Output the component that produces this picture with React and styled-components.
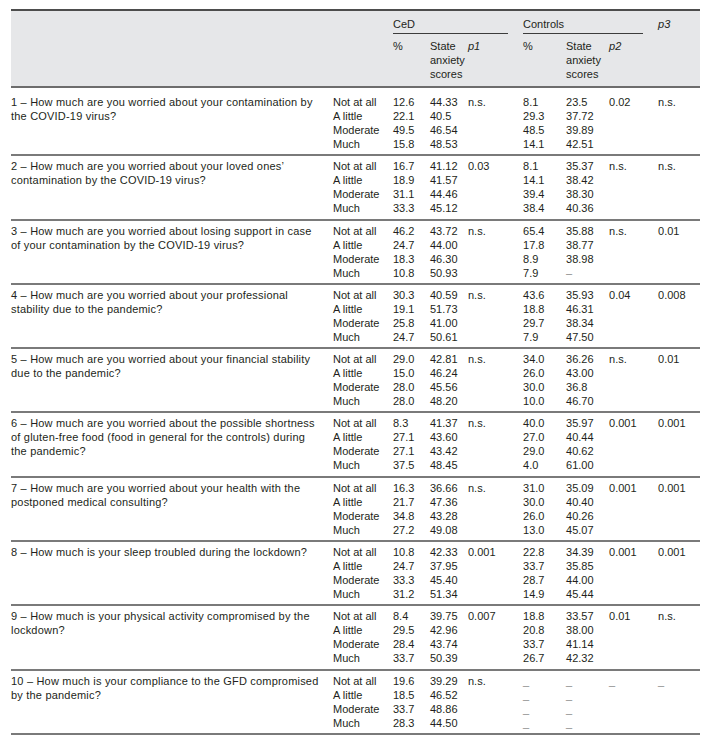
import React from "react";
import styled, { createGlobalStyle } from "styled-components";

const GlobalStyle = createGlobalStyle`
  html, body {
    margin: 0;
    padding: 0;
    background: #ffffff;
  }
  body {
    font-family: "Liberation Sans", Arial, sans-serif;
    font-size: 11px;
    color: #231f20;
  }
`;

const levels = ["Not at all", "A little", "Moderate", "Much"];

const rows = [
  {
    q: "1 – How much are you worried about your contamination by the COVID-19 virus?",
    cedPct: ["12.6", "22.1", "49.5", "15.8"],
    cedScore: ["44.33", "40.5", "46.54", "48.53"],
    p1: "n.s.",
    ctlPct: ["8.1", "29.3", "48.5", "14.1"],
    ctlScore: ["23.5", "37.72", "39.89", "42.51"],
    p2: "0.02",
    p3: "n.s.",
  },
  {
    q: "2 – How much are you worried about your loved ones’ contamination by the COVID-19 virus?",
    cedPct: ["16.7", "18.9", "31.1", "33.3"],
    cedScore: ["41.12", "41.57", "44.46", "45.12"],
    p1: "0.03",
    ctlPct: ["8.1", "14.1", "39.4", "38.4"],
    ctlScore: ["35.37", "38.42", "38.30", "40.36"],
    p2: "n.s.",
    p3: "n.s.",
  },
  {
    q: "3 – How much are you worried about losing support in case of your contamination by the COVID-19 virus?",
    cedPct: ["46.2", "24.7", "18.3", "10.8"],
    cedScore: ["43.72", "44.00", "46.30", "50.93"],
    p1: "n.s.",
    ctlPct: ["65.4", "17.8", "8.9", "7.9"],
    ctlScore: ["35.88", "38.77", "38.98", "–"],
    p2: "n.s.",
    p3: "0.01",
  },
  {
    q: "4 – How much are you worried about your professional stability due to the pandemic?",
    cedPct: ["30.3", "19.1", "25.8", "24.7"],
    cedScore: ["40.59", "51.73", "41.00", "50.61"],
    p1: "n.s.",
    ctlPct: ["43.6", "18.8", "29.7", "7.9"],
    ctlScore: ["35.93", "46.31", "38.34", "47.50"],
    p2: "0.04",
    p3: "0.008",
  },
  {
    q: "5 – How much are you worried about your financial stability due to the pandemic?",
    cedPct: ["29.0", "15.0", "28.0", "28.0"],
    cedScore: ["42.81", "46.24", "45.56", "48.20"],
    p1: "n.s.",
    ctlPct: ["34.0", "26.0", "30.0", "10.0"],
    ctlScore: ["36.26", "43.00", "36.8", "46.70"],
    p2: "n.s.",
    p3: "0.01",
  },
  {
    q: "6 – How much are you worried about the possible shortness of gluten-free food (food in general for the controls) during the pandemic?",
    cedPct: ["8.3", "27.1", "27.1", "37.5"],
    cedScore: ["41.37", "43.60", "43.42", "48.45"],
    p1: "n.s.",
    ctlPct: ["40.0", "27.0", "29.0", "4.0"],
    ctlScore: ["35.97", "40.44", "40.62", "61.00"],
    p2: "0.001",
    p3: "0.001",
  },
  {
    q: "7 – How much are you worried about your health with the postponed medical consulting?",
    cedPct: ["16.3", "21.7", "34.8", "27.2"],
    cedScore: ["36.66", "47.36", "43.28", "49.08"],
    p1: "n.s.",
    ctlPct: ["31.0", "30.0", "26.0", "13.0"],
    ctlScore: ["35.09", "40.40", "40.26", "45.07"],
    p2: "0.001",
    p3: "0.001",
  },
  {
    q: "8 – How much is your sleep troubled during the lockdown?",
    cedPct: ["10.8", "24.7", "33.3", "31.2"],
    cedScore: ["42.33", "37.95", "45.40", "51.34"],
    p1: "0.001",
    ctlPct: ["22.8", "33.7", "28.7", "14.9"],
    ctlScore: ["34.39", "35.85", "44.00", "45.44"],
    p2: "0.001",
    p3: "0.001",
  },
  {
    q: "9 – How much is your physical activity compromised by the lockdown?",
    cedPct: ["8.4", "29.5", "28.4", "33.7"],
    cedScore: ["39.75", "42.96", "43.74", "50.39"],
    p1: "0.007",
    ctlPct: ["18.8", "20.8", "33.7", "26.7"],
    ctlScore: ["33.57", "38.00", "41.14", "42.32"],
    p2: "0.01",
    p3: "n.s.",
  },
  {
    q: "10 – How much is your compliance to the GFD compromised by the pandemic?",
    cedPct: ["19.6", "18.5", "33.7", "28.3"],
    cedScore: ["39.29", "46.52", "48.86", "44.50"],
    p1: "n.s.",
    ctlPct: ["_", "_", "_", "_"],
    ctlScore: ["_", "_", "_", "_"],
    p2: "_",
    p3: "_",
  },
];

const widths = [322, 60, 37, 38, 55, 43, 43, 49, 42];

const Table = styled.table`
  margin: 9px 0 0 11px;
  width: 689px;
  table-layout: fixed;
  border-collapse: separate;
  border-spacing: 0;
  line-height: 14px;
`;

const HeadCell = styled.th`
  background: #e6e7e9;
  font-weight: normal;
  text-align: left;
  vertical-align: top;
  padding: ${(p) => (p.$top ? "6px 0 0 0" : "5px 0 5px 0")};
  border-top: ${(p) => (p.$top ? "2px solid #4d4d4d" : "none")};
  border-bottom: ${(p) => (p.$top ? "none" : "2px solid #6d6d6d")};
  font-style: ${(p) => (p.$italic ? "italic" : "normal")};
`;

const GroupCell = styled(HeadCell)`
  padding-right: 15px;
`;

const GroupLabel = styled.span`
  display: block;
  padding-bottom: 2px;
  border-bottom: 1px solid #3c3c3c;
`;

const Cell = styled.td`
  vertical-align: top;
  padding: ${(p) => (p.$first ? "7px 0 3.3px 0" : "3px 0 3.3px 0")};
  border-bottom: 2px solid #7a7a7a;
`;

const QuestionCell = styled(Cell)`
  padding-right: 12px;
  letter-spacing: 0.2px;
`;

const Line = styled.div`
  height: 14px;
  white-space: nowrap;
  color: ${(p) => (p.$muted ? "#8a8a8a" : "inherit")};
`;

function Stack({ items }) {
  return items.map((v, i) => (
    <Line key={i} $muted={v === "_" || v === "–"}>
      {v}
    </Line>
  ));
}

export default function App() {
  return (
    <>
      <GlobalStyle />
      <Table>
        <colgroup>
          {widths.map((w, i) => (
            <col key={i} style={{ width: w }} />
          ))}
        </colgroup>
        <thead>
          <tr>
            <HeadCell $top colSpan={2} />
            <GroupCell $top colSpan={3}>
              <GroupLabel>CeD</GroupLabel>
            </GroupCell>
            <GroupCell $top colSpan={3}>
              <GroupLabel>Controls</GroupLabel>
            </GroupCell>
            <HeadCell $top $italic>
              p3
            </HeadCell>
          </tr>
          <tr>
            <HeadCell colSpan={2} />
            <HeadCell>%</HeadCell>
            <HeadCell>
              State
              <br />
              anxiety
              <br />
              scores
            </HeadCell>
            <HeadCell $italic>p1</HeadCell>
            <HeadCell>%</HeadCell>
            <HeadCell>
              State
              <br />
              anxiety
              <br />
              scores
            </HeadCell>
            <HeadCell $italic>p2</HeadCell>
            <HeadCell />
          </tr>
        </thead>
        <tbody>
          {rows.map((r, i) => {
            const first = i === 0;
            return (
              <tr key={i}>
                <QuestionCell $first={first}>{r.q}</QuestionCell>
                <Cell $first={first}>
                  <Stack items={levels} />
                </Cell>
                <Cell $first={first}>
                  <Stack items={r.cedPct} />
                </Cell>
                <Cell $first={first}>
                  <Stack items={r.cedScore} />
                </Cell>
                <Cell $first={first}>
                  <Stack items={[r.p1]} />
                </Cell>
                <Cell $first={first}>
                  <Stack items={r.ctlPct} />
                </Cell>
                <Cell $first={first}>
                  <Stack items={r.ctlScore} />
                </Cell>
                <Cell $first={first}>
                  <Stack items={[r.p2]} />
                </Cell>
                <Cell $first={first}>
                  <Stack items={[r.p3]} />
                </Cell>
              </tr>
            );
          })}
        </tbody>
      </Table>
    </>
  );
}
